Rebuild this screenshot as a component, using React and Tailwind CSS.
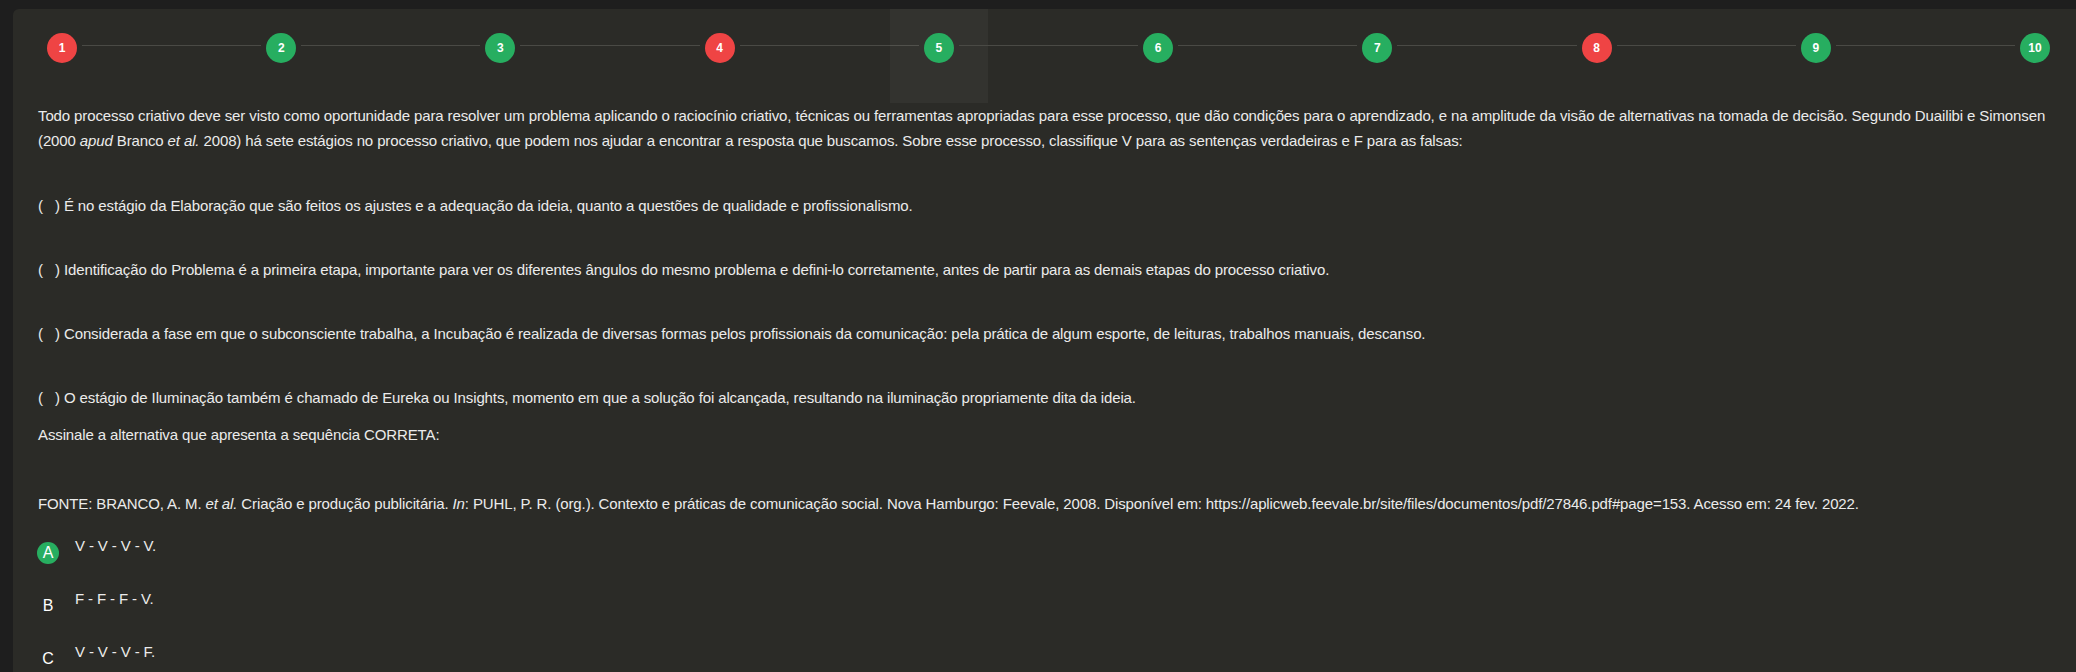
import React from "react";

const steps = [
  { n: 1, c: "bg-[#ef4444]" },
  { n: 2, c: "bg-[#27ae60]" },
  { n: 3, c: "bg-[#27ae60]" },
  { n: 4, c: "bg-[#ef4444]" },
  { n: 5, c: "bg-[#27ae60]", active: true },
  { n: 6, c: "bg-[#27ae60]" },
  { n: 7, c: "bg-[#27ae60]" },
  { n: 8, c: "bg-[#ef4444]" },
  { n: 9, c: "bg-[#27ae60]" },
  { n: 10, c: "bg-[#27ae60]" },
];

const font = { fontFamily: '"Liberation Sans Narrow", "Liberation Sans", Arial, sans-serif' };

function Stepper() {
  const items = [];
  steps.forEach((s, i) => {
    if (i > 0) {
      items.push(
        <div key={"l" + i} className="flex-1 mx-[-29px] mt-[36px] h-px bg-[#4a4a45]" />
      );
    }
    items.push(
      <div
        key={"s" + i}
        className={
          "w-[98px] h-[94px] shrink-0 flex justify-center pt-[24px] " +
          (s.active ? "bg-white/[0.04]" : "")
        }
      >
        <div
          className={
            "relative w-[30px] h-[30px] rounded-full flex items-center justify-center text-white text-[12px] font-bold tracking-normal " +
            s.c
          }
        >
          {s.n}
        </div>
      </div>
    );
  });
  return <div className="flex items-start">{items}</div>;
}

function Option({ letter, text, selected }) {
  return (
    <div className="flex items-start h-[53px]">
      <div className="w-[22px] ml-[24px] mt-[9px] flex justify-center">
        {selected ? (
          <div className="w-[22px] h-[22px] rounded-full bg-[#27ae60] flex items-center justify-center text-white text-[16px] leading-none">
            {letter}
          </div>
        ) : (
          <div className="w-[22px] h-[22px] flex items-center justify-center text-white text-[16px] leading-none">
            {letter}
          </div>
        )}
      </div>
      <div className="ml-[16px] leading-[25px]">{text}</div>
    </div>
  );
}

export default function App() {
  return (
    <div className="w-[2076px] h-[672px] overflow-hidden bg-[#1e1e1e] pt-[9px] pl-[13px]" style={font}>
      <div className="w-[2071px] h-[700px] bg-[#2b2b27] rounded-tl-[6px] text-[#ebebeb] text-[15px] tracking-[-0.12px]">
        <Stepper />
        <div className="px-[25px] leading-[25px]">
          <p>
            Todo processo criativo deve ser visto como oportunidade para resolver um problema aplicando o raciocínio criativo, técnicas ou ferramentas apropriadas para esse processo, que dão condições para o aprendizado, e na amplitude da visão de alternativas na tomada de decisão. Segundo Duailibi e Simonsen (2000 <i>apud</i> Branco <i>et al.</i> 2008) há sete estágios no processo criativo, que podem nos ajudar a encontrar a resposta que buscamos. Sobre esse processo, classifique V para as sentenças verdadeiras e F para as falsas:
          </p>
          <p className="mt-[40px]">(&nbsp;&nbsp;&nbsp;) É no estágio da Elaboração que são feitos os ajustes e a adequação da ideia, quanto a questões de qualidade e profissionalismo.</p>
          <p className="mt-[39px]">(&nbsp;&nbsp;&nbsp;) Identificação do Problema é a primeira etapa, importante para ver os diferentes ângulos do mesmo problema e defini-lo corretamente, antes de partir para as demais etapas do processo criativo.</p>
          <p className="mt-[39px]">(&nbsp;&nbsp;&nbsp;) Considerada a fase em que o subconsciente trabalha, a Incubação é realizada de diversas formas pelos profissionais da comunicação: pela prática de algum esporte, de leituras, trabalhos manuais, descanso.</p>
          <p className="mt-[39px]">(&nbsp;&nbsp;&nbsp;) O estágio de Iluminação também é chamado de Eureka ou Insights, momento em que a solução foi alcançada, resultando na iluminação propriamente dita da ideia.</p>
          <p className="mt-[12px]">Assinale a alternativa que apresenta a sequência CORRETA:</p>
          <p className="mt-[44px]">
            FONTE: BRANCO, A. M. <i>et al.</i> Criação e produção publicitária. <i>In</i>: PUHL, P. R. (org.). Contexto e práticas de comunicação social. Nova Hamburgo: Feevale, 2008. Disponível em: https://aplicweb.feevale.br/site/files/documentos/pdf/27846.pdf#page=153. Acesso em: 24 fev. 2022.
          </p>
        </div>
        <div className="mt-[17px]">
          <Option letter="A" text="V - V - V - V." selected />
          <Option letter="B" text="F - F - F - V." />
          <Option letter="C" text="V - V - V - F." />
        </div>
      </div>
    </div>
  );
}
